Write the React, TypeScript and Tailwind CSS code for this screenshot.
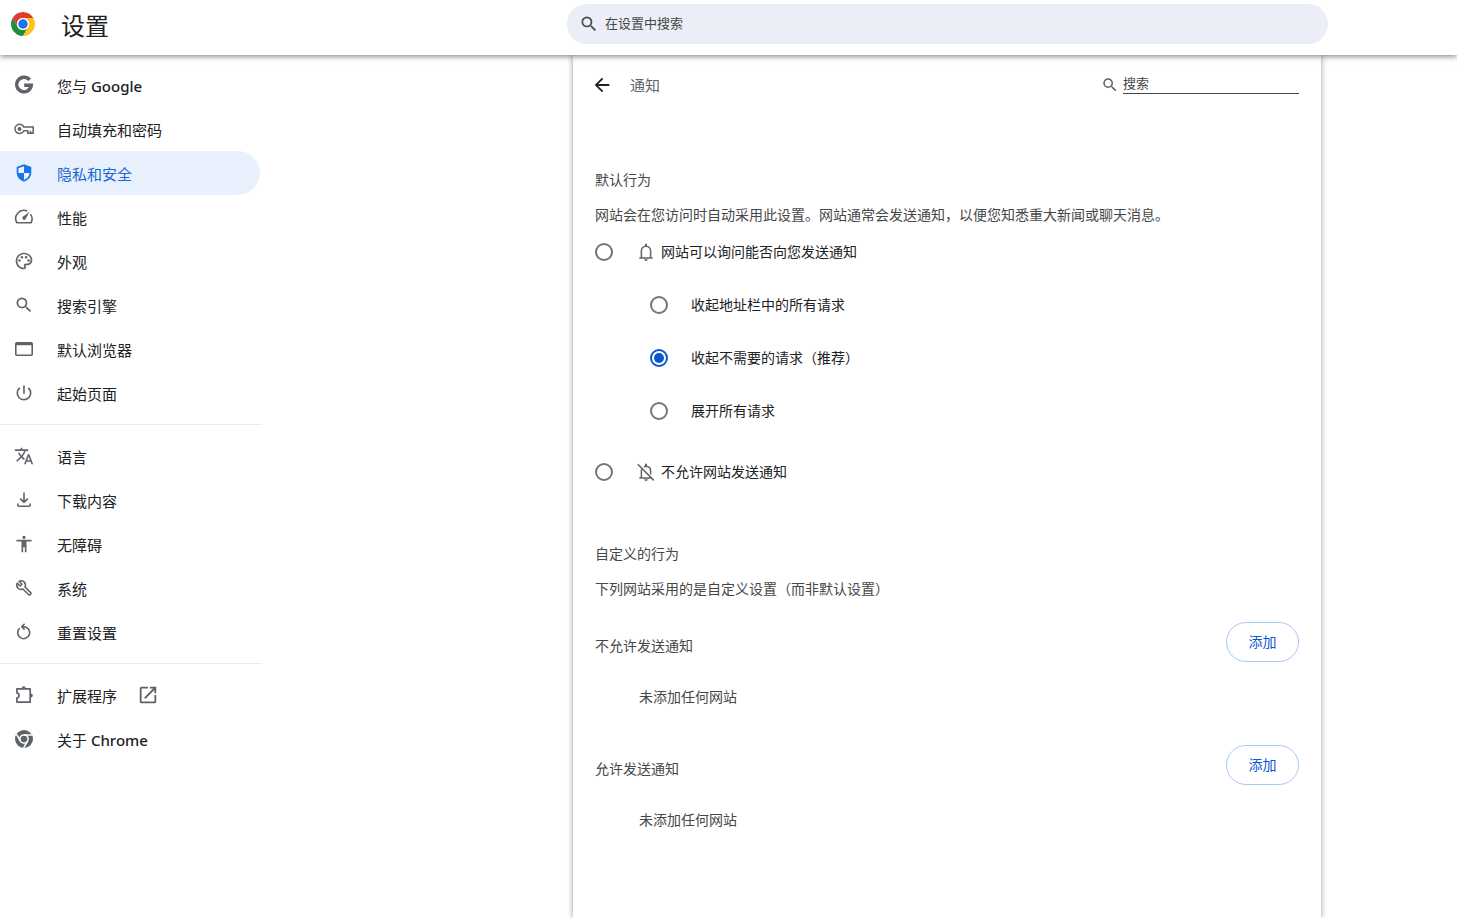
import React from "react";
import {
    MdAccessibility,
    MdArrowBack,
    MdOutlineColorLens,
    MdOpenInNew,
    MdPowerSettingsNew,
    MdSearch,
    MdTranslate,
} from "react-icons/md";

interface MenuItem {
    label: string;
    brand?: string;
    icon: React.ReactNode;
    active?: boolean;
    external?: boolean;
}

interface RadioRowProps {
    id: string;
    name: string;
    label: string;
    icon?: React.ReactNode;
    defaultChecked?: boolean;
}

interface SiteListProps {
    title: string;
}

const ChromeLogo = () => (
    <svg viewBox="0 0 48 48" className="size-6" aria-hidden="true">
        <path d="M24 48L34.4 30A12 12 0 0 1 13.6 30L3.22 12A24 24 0 0 0 24 48Z" fill="#1e8e3e" />
        <path d="M24 48A24 24 0 0 0 44.78 12L24 12A12 12 0 0 1 34.4 30Z" fill="#fcc31e" />
        <path d="M44.78 12A24 24 0 0 0 3.22 12L13.6 30A12 12 0 0 1 24 12Z" fill="#e33b2e" />
        <circle cx="24" cy="24" r="12" fill="#fff" />
        <circle cx="24" cy="24" r="9.5" fill="#1a73e8" />
    </svg>
);

const GoogleIcon = () => (
    <svg viewBox="0 0 20 20" className="size-5" fill="none" stroke="currentColor" strokeWidth="3.4">
        <path d="M15.6 4.8A7.3 7.3 0 1 0 17.3 10.3H10.2" />
    </svg>
);

const KeyIcon = () => (
    <svg viewBox="0 0 20 20" className="size-5" fill="none" stroke="currentColor" strokeWidth="1.5">
        <path d="M9.8 8.1A4.6 4.6 0 1 0 9.8 11.7H13.8V14.3H19.2V8.1Z" />
        <path d="M16.5 14.3V11.8" />
        <circle cx="5.5" cy="9.9" r="2" fill="currentColor" stroke="none" />
    </svg>
);

const ShieldIcon = () => (
    <svg viewBox="0 0 20 20" className="size-5" fill="currentColor">
        <path
            fillRule="evenodd"
            d="M10 1.3 2.7 4V9.6C2.7 13.9 5.8 17.4 10 18.7 14.2 17.4 17.3 13.9 17.3 9.6V4ZM10 3.2V10H15.6C15.3 13.2 13.1 15.8 10 17V10H4.4V5.2Z"
        />
    </svg>
);

const SpeedIcon = () => (
    <svg viewBox="0 0 20 20" className="size-5" fill="none" stroke="currentColor" strokeWidth="1.6">
        <path d="M13.2 4.1A8.1 8.1 0 0 0 3 15.8H17A8.1 8.1 0 0 0 16.5 7.1" />
        <path d="M15.6 4.8 11.4 12.2A1.7 1.7 0 1 1 8.8 9.8Z" fill="currentColor" stroke="none" />
    </svg>
);

const BrowserIcon = () => (
    <svg viewBox="0 0 20 20" className="size-5" fill="none" stroke="currentColor" strokeWidth="1.6">
        <rect x="1.8" y="3.8" width="16.4" height="12.4" rx="1" />
        <path d="M1.8 5H18.2" strokeWidth="2.4" />
    </svg>
);

const DownloadIcon = () => (
    <svg viewBox="0 0 20 20" className="size-5" fill="none" stroke="currentColor" strokeWidth="1.6">
        <path d="M10 2.5V12M6.2 8.6 10 12.4 13.8 8.6" />
        <path d="M3.8 13.4V15Q3.8 16.2 5 16.2H15Q16.2 16.2 16.2 15V13.4" />
    </svg>
);

const WrenchIcon = () => (
    <svg viewBox="0 0 20 20" className="size-5" fill="none" stroke="currentColor" strokeWidth="1.5" strokeLinejoin="round">
        <path d="M5 3.3 8 6.2 6.2 8 3.3 5A4.3 4.3 0 0 0 8.9 11L14.7 16.7Q15.4 17.3 16 16.7L16.8 15.9Q17.4 15.3 16.7 14.6L11 8.9A4.3 4.3 0 0 0 5 3.3Z" />
    </svg>
);

const ResetIcon = () => (
    <svg viewBox="0 0 20 20" className="size-5" fill="none" stroke="currentColor" strokeWidth="1.6">
        <path d="M5.7 6.2A6 6 0 1 0 10 4.7H8.2" />
        <path d="M10.6 1.8 7.8 4.7 10.6 7.6" />
    </svg>
);

const ExtensionIcon = () => (
    <svg viewBox="0 0 20 20" className="size-5" fill="none" stroke="currentColor" strokeWidth="1.7">
        <path d="M2.9 3.8H16.2V17.1H2.9V13A2.6 2.6 0 0 0 2.9 7.9Z" strokeLinejoin="round" />
        <path d="M7.7 3.2A2 2 0 0 1 11.7 3.2ZM16.8 8.5A2 2 0 0 1 16.8 12.5Z" fill="currentColor" stroke="none" />
    </svg>
);

const ChromeIcon = () => (
    <svg viewBox="0 0 20 20" className="size-5">
        <circle cx="10" cy="10" r="9" fill="currentColor" />
        <circle cx="10" cy="10" r="4.1" fill="none" stroke="#fff" strokeWidth="1.5" />
        <path d="M10 5.9H18.2M6.4 12 2.4 5.2M13.6 12 9.6 18.8" stroke="#fff" strokeWidth="1.5" />
    </svg>
);

const BellIcon = () => (
    <svg viewBox="0 0 20 20" className="size-5" fill="none" stroke="currentColor" strokeWidth="1.5">
        <path d="M3.3 16H16.7M5.4 16V8.8A4.6 4.6 0 0 1 14.6 8.8V16" />
        <path d="M9 4V2.6A1 1 0 0 1 11 2.6V4ZM8.2 17.2H11.8A1.8 1.8 0 0 1 8.2 17.2Z" fill="currentColor" stroke="none" />
    </svg>
);

const BellOffIcon = () => (
    <svg viewBox="0 0 20 20" className="size-5" fill="none" stroke="currentColor" strokeWidth="1.5">
        <path d="M3.3 16H15.5M5.4 16V8.8Q5.4 7.2 6.3 6.1M7.8 4.8Q8.9 4.2 10 4.2 14.6 4.4 14.6 8.8V12.6" />
        <path d="M1.8 2.2 17.8 18.4" />
        <path d="M9 4V2.6A1 1 0 0 1 11 2.6V4ZM8.2 17.2H11.8A1.8 1.8 0 0 1 8.2 17.2Z" fill="currentColor" stroke="none" />
    </svg>
);

const menuGroups: MenuItem[][] = [
    [
        { label: "您与", brand: "Google", icon: <GoogleIcon /> },
        { label: "自动填充和密码", icon: <KeyIcon /> },
        { label: "隐私和安全", icon: <ShieldIcon />, active: true },
        { label: "性能", icon: <SpeedIcon /> },
        { label: "外观", icon: <MdOutlineColorLens size={20} /> },
        { label: "搜索引擎", icon: <MdSearch size={20} /> },
        { label: "默认浏览器", icon: <BrowserIcon /> },
        { label: "起始页面", icon: <MdPowerSettingsNew size={20} /> },
    ],
    [
        { label: "语言", icon: <MdTranslate size={20} /> },
        { label: "下载内容", icon: <DownloadIcon /> },
        { label: "无障碍", icon: <MdAccessibility size={20} /> },
        { label: "系统", icon: <WrenchIcon /> },
        { label: "重置设置", icon: <ResetIcon /> },
    ],
    [
        { label: "扩展程序", icon: <ExtensionIcon />, external: true },
        { label: "关于", brand: "Chrome", icon: <ChromeIcon /> },
    ],
];

const Header = () => (
    <header className="relative z-10 flex h-[55px] shrink-0 items-start bg-white pr-[129px] shadow-[0_1px_6px_rgba(0,0,0,0.55)]">
        <div className="flex h-12 w-[567px] shrink-0 items-center gap-[26px] pl-[11px]">
            <ChromeLogo />
            <h1 className="pt-1 text-2xl text-[#202124]">设置</h1>
        </div>
        <label className="mt-1 flex h-10 flex-1 items-center gap-1.5 rounded-full bg-[#ebeef7] pl-3 text-[#474747]">
            <MdSearch size={20} />
            <input
                type="text"
                aria-label="在设置中搜索"
                placeholder="在设置中搜索"
                className="min-w-0 flex-1 bg-transparent text-[13px] outline-none placeholder:text-[#474747]"
            />
        </label>
    </header>
);

const Sidebar = () => (
    <nav className="w-[262px] shrink-0 pt-2">
        {menuGroups.map((group, idx) => (
            <ul key={idx} className="mb-[9px] border-t border-[#e8eaed] pt-[9px] first:border-t-0 first:pt-0">
                {group.map(({ label, brand, icon, active, external }) => (
                    <li key={label}>
                        <a
                            href="#"
                            className={`mr-0.5 flex h-11 items-center rounded-r-full pl-3.5 text-[15px] ${
                                active ? "bg-[#e8f0fe] text-[#1967d2]" : "text-[#202124]"
                            }`}
                        >
                            <span className={`mr-[23px] ${active ? "text-[#1a73e8]" : "text-[#5f6368]"}`}>{icon}</span>
                            <span className="pt-0.5">
                                {label}
                                {brand && <span className="font-['Noto_Sans'] font-medium"> {brand}</span>}
                            </span>
                            {external && <MdOpenInNew size={22} className="ml-5 text-[#5f6368]" />}
                        </a>
                    </li>
                ))}
            </ul>
        ))}
    </nav>
);

const RadioRow = ({ id, name, label, icon, defaultChecked }: RadioRowProps) => (
    <div className="flex items-center">
        <input
            type="radio"
            id={id}
            name={name}
            defaultChecked={defaultChecked}
            className="size-[18px] shrink-0 appearance-none rounded-full border-2 border-[#757575] checked:border-[#0b57d0] checked:bg-[#0b57d0] checked:bg-clip-content checked:p-0.5"
        />
        <label htmlFor={id} className="ml-[23px] flex items-center gap-[5px] text-sm text-[#202124]">
            {icon && <span className="text-[#5f6368]">{icon}</span>}
            {label}
        </label>
    </div>
);

const SiteList = ({ title }: SiteListProps) => (
    <section className="h-[123px]">
        <div className="flex items-center justify-between">
            <h3 className="pt-2 text-sm">{title}</h3>
            <button type="button" className="h-10 w-[73px] rounded-full border border-[#a8c7fa] text-sm text-[#0b57d0]">
                添加
            </button>
        </div>
        <p className="mt-[25px] pl-11 text-sm">未添加任何网站</p>
    </section>
);

const App = () => {
    return (
        <div className="flex min-h-screen flex-col bg-white font-['Open_Sans','Noto_Sans_CJK_SC',sans-serif] text-[#474747]">
            <Header />
            <div className="flex flex-1">
                <Sidebar />
                <main className="mr-[136px] ml-[311px] flex-1 bg-white px-[22px] shadow-[0_0_6px_rgba(0,0,0,0.4)]">
                    <div className="flex h-[60px] items-center">
                        <button type="button" aria-label="返回" className="-ml-1 text-[#202124]">
                            <MdArrowBack size={22} />
                        </button>
                        <h2 className="ml-[17px] flex-1 text-[15px] text-[#5f6368]">通知</h2>
                        <label className="flex items-center gap-1 pb-1">
                            <MdSearch size={18} className="mt-1 text-[#5f6368]" />
                            <input
                                type="text"
                                aria-label="搜索"
                                placeholder="搜索"
                                className="h-[22px] w-44 border-b border-[#474747] bg-transparent text-[13px] outline-none placeholder:text-[#474747]"
                            />
                        </label>
                    </div>

                    <h2 className="mt-[55px] text-sm">默认行为</h2>
                    <p className="mt-[15px] text-sm">网站会在您访问时自动采用此设置。网站通常会发送通知，以便您知悉重大新闻或聊天消息。</p>

                    <div className="mt-[17px]">
                        <RadioRow id="ask" name="default" label="网站可以询问能否向您发送通知" icon={<BellIcon />} />
                        <div className="mt-[33px] mb-[41px] flex flex-col gap-[33px] pl-[55px]">
                            <RadioRow id="quiet" name="prompt" label="收起地址栏中的所有请求" />
                            <RadioRow id="cpss" name="prompt" label="收起不需要的请求（推荐）" defaultChecked />
                            <RadioRow id="loud" name="prompt" label="展开所有请求" />
                        </div>
                        <RadioRow id="block" name="default" label="不允许网站发送通知" icon={<BellOffIcon />} />
                    </div>

                    <h2 className="mt-[62px] text-sm">自定义的行为</h2>
                    <p className="mt-[15px] mb-[23px] text-sm">下列网站采用的是自定义设置（而非默认设置）</p>
                    <SiteList title="不允许发送通知" />
                    <SiteList title="允许发送通知" />
                </main>
            </div>
        </div>
    );
};

export default App;
